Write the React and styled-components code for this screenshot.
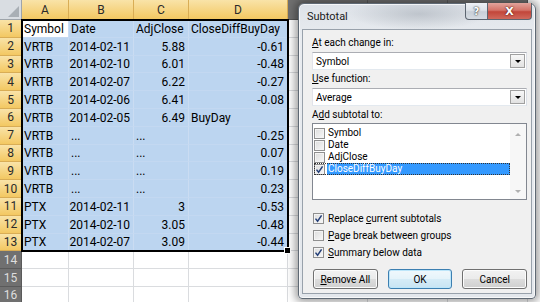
import React from 'react';
import styled, {createGlobalStyle, css} from 'styled-components';

const GlobalStyle = createGlobalStyle`
    html, body {
        margin: 0;
        padding: 0;
        background: #fff;
        overflow: hidden;
    }
`

const Screen = styled.div`
    position: relative;
    width: 540px;
    height: 302px;
    overflow: hidden;
    background: #fff;
`

const colWidths = [22, 47, 65, 55, 99, 80, 80, 80];

const Sheet = styled.div`
    display: grid;
    grid-template-columns: ${colWidths.map(w => w + 'px').join(' ')};
    grid-template-rows: 20px repeat(16, 17.8px);
    font-family: Roboto, "Liberation Sans", sans-serif;
    font-size: 12px;
    color: #000;
`

const Corner = styled.div`
    position: relative;
    background: #d9dde2;
    border-right: 1px solid #9ea4aa;
    border-bottom: 1px solid #9ea4aa;
    box-sizing: border-box;
    &::after {
        content: '';
        position: absolute;
        right: 2px;
        bottom: 2px;
        border-left: 11px solid transparent;
        border-bottom: 11px solid #a9afb5;
    }
`

const headBase = css`
    display: flex;
    align-items: center;
    justify-content: center;
    box-sizing: border-box;
    font-size: 12px;
    ${props => props.$on ? css`
        background: linear-gradient(#f9e3a8, #f3c862);
        color: #2a2a2a;
    ` : css`
        background: #707070;
        color: #dedede;
    `}
`

const ColHead = styled.div`
    ${headBase};
    border-right: 1px solid ${props => props.$on ? '#d9ad55' : '#5a5a5a'};
    border-bottom: 1px solid ${props => props.$on ? '#e1922f' : '#5a5a5a'};
`

const RowHead = styled.div`
    ${headBase};
    border-right: 1px solid ${props => props.$on ? '#e1922f' : '#5a5a5a'};
    border-bottom: 1px solid ${props => props.$on ? '#d9ad55' : '#5a5a5a'};
`

const Cell = styled.div`
    display: flex;
    align-items: center;
    justify-content: ${props => props.$right ? 'flex-end' : 'flex-start'};
    padding: 1px 3px 0 2px;
    box-sizing: border-box;
    white-space: nowrap;
    background: ${props => props.$active ? '#fff' : props.$sel ? '#bcd5f0' : '#fff'};
    border-right: 1px solid ${props => props.$sel ? '#cadcf2' : '#dadcdf'};
    border-bottom: 1px solid ${props => props.$sel ? '#c3d8f1' : '#dadcdf'};
`

const SelectionFrame = styled.div`
    position: absolute;
    left: 21px;
    top: 19px;
    width: 268px;
    height: 233px;
    border: 2px solid #000;
    box-sizing: border-box;
    pointer-events: none;
    &::after {
        content: '';
        position: absolute;
        right: -4px;
        bottom: -4px;
        width: 5px;
        height: 5px;
        background: #000;
        border: 1px solid #fff;
    }
`

const rows = [
    ['Symbol', 'Date', 'AdjClose', 'CloseDiffBuyDay'],
    ['VRTB', '2014-02-11', '5.88', '-0.61'],
    ['VRTB', '2014-02-10', '6.01', '-0.48'],
    ['VRTB', '2014-02-07', '6.22', '-0.27'],
    ['VRTB', '2014-02-06', '6.41', '-0.08'],
    ['VRTB', '2014-02-05', '6.49', 'BuyDay'],
    ['VRTB', '...', '...', '-0.25'],
    ['VRTB', '...', '...', '0.07'],
    ['VRTB', '...', '...', '0.19'],
    ['VRTB', '...', '...', '0.23'],
    ['PTX', '2014-02-11', '3', '-0.53'],
    ['PTX', '2014-02-10', '3.05', '-0.48'],
    ['PTX', '2014-02-07', '3.09', '-0.44'],
];

const isNumeric = (v) => /^-?\d[\d.]*$/.test(v) || /^\d{4}-\d\d-\d\d$/.test(v);

function Spreadsheet() {
    // columns E onwards sit under the dialog, so their letters are left out
    const letters = ['A', 'B', 'C', 'D', '', '', ''];
    const cells = [<Corner key="corner" />];
    letters.forEach((l, i) => {
        cells.push(<ColHead key={'h' + i} $on={i < 4}>{l}</ColHead>);
    });
    for (let r = 0; r < 16; r++) {
        const data = rows[r];
        cells.push(<RowHead key={'r' + r} $on={!!data}>{r + 1}</RowHead>);
        letters.forEach((l, c) => {
            const v = data && c < 4 ? data[c] : '';
            cells.push(
                <Cell
                    key={c + '-' + r}
                    $sel={!!data && c < 4}
                    $active={r === 0 && c === 0}
                    $right={r > 0 && isNumeric(v)}
                >
                    {v}
                </Cell>
            );
        });
    }
    return (
        <>
            <Sheet>{cells}</Sheet>
            <SelectionFrame />
        </>
    );
}

/* ---------- dialog ---------- */

const Dialog = styled.div`
    position: absolute;
    left: 298px;
    top: 3px;
    width: 238px;
    height: 296px;
    box-sizing: border-box;
    display: flex;
    flex-direction: column;
    padding: 0 3px 4px 3px;
    border: 1px solid #5f6974;
    border-radius: 6px 6px 4px 4px;
    background:
        radial-gradient(ellipse 70px 16px at 120px 10px, rgba(150, 158, 168, 0.45), transparent),
        linear-gradient(180deg, #dde2e8 0%, #e9ecf0 12%, #e3e7ec 100%);
    box-shadow: 0 0 8px 3px rgba(0, 0, 0, 0.38), inset 0 0 0 1px rgba(255, 255, 255, 0.7);
    font-family: Roboto, "Noto Sans", sans-serif;
    font-size: 10px;
    color: #000;
`

const TitleBar = styled.div`
    display: flex;
    height: 25px;
    flex-shrink: 0;
`

const Title = styled.div`
    align-self: center;
    padding-left: 5px;
    font-size: 11px;
    color: #1a1a1a;
`

const CaptionButtons = styled.div`
    display: flex;
    margin-left: auto;
    margin-top: -1px;
    align-self: flex-start;
`

const CaptionButton = styled.div`
    height: 17px;
    box-sizing: border-box;
    display: flex;
    align-items: center;
    justify-content: center;
    border: 1px solid #5c6570;
    border-top: none;
    font-family: "DejaVu Sans", sans-serif;
    font-weight: bold;
    color: #fff;
    ${props => props.$close ? css`
        width: 44px;
        border-radius: 0 0 4px 0;
        border-left: none;
        background: linear-gradient(#e2a49c 0%, #d47368 45%, #c2463a 55%, #d0695c 100%);
        font-size: 11px;
        text-shadow: 0 0 2px #5a1a14, 0 0 1px #5a1a14;
    ` : css`
        width: 23px;
        border-radius: 0 0 0 4px;
        background: linear-gradient(#eef1f5 0%, #dde2e8 45%, #c8cfd7 55%, #d6dce3 100%);
        font-size: 10px;
        text-shadow: 0 0 2px #333, 0 0 1px #333;
    `}
`

const Client = styled.div`
    flex: 1;
    display: flex;
    flex-direction: column;
    background: #f0f0f0;
    border: 1px solid #98a1ab;
    padding: 6px 4px 0 9px;
`

const Label = styled.div`
    height: 14px;
    line-height: 14px;
    margin-top: ${props => props.$first ? 0 : 2}px;
`

const Key = styled.span`
    text-decoration: underline;
    text-underline-offset: 1px;
`

const Combo = styled.div`
    display: flex;
    align-items: center;
    height: 18px;
    margin-top: 2px;
    box-sizing: border-box;
    background: #fff;
    border: 1px solid #abadb3;
    border-color: #abadb3 #dbdfe6 #e3e9ef #e2e3ea;
    padding-left: 3px;
`

const ComboText = styled.span`
    flex: 1;
`

const DropButton = styled.div`
    width: 15px;
    height: 14px;
    margin-right: 1px;
    box-sizing: border-box;
    border: 1px solid #a0a0a0;
    background: linear-gradient(#f7f7f7, #e2e2e2);
    display: flex;
    align-items: center;
    justify-content: center;
    &::after {
        content: '';
        border-left: 3px solid transparent;
        border-right: 3px solid transparent;
        border-top: 3px solid #000;
    }
`

const ListBox = styled.div`
    display: flex;
    height: 77px;
    margin-top: 1px;
    box-sizing: border-box;
    background: #fff;
    border: 1px solid #828790;
`

const ListItems = styled.div`
    flex: 1;
    padding-top: 3px;
`

const ListItem = styled.div`
    display: flex;
    align-items: center;
    height: 12px;
    margin-left: 1px;
    box-sizing: border-box;
    ${props => props.$focus && css`
        outline: 1px dotted #333;
        outline-offset: -1px;
    `}
`

const ItemText = styled.span`
    flex: 1;
    height: 12px;
    line-height: 12px;
    margin-left: 2px;
    padding-left: 1px;
    ${props => props.$sel && css`
        background: #3399ff;
        color: #fff;
    `}
`

const ScrollBar = styled.div`
    width: 16px;
    display: flex;
    flex-direction: column;
    justify-content: space-between;
    align-items: center;
    padding: 9px 0 6px;
    box-sizing: border-box;
    background: #f7f7f7;
`

const Arrow = styled.div`
    border-left: 3px solid transparent;
    border-right: 3px solid transparent;
    ${props => props.$up ? css`
        border-bottom: 3px solid #b0b0b0;
    ` : css`
        border-top: 3px solid #b0b0b0;
    `}
`

const Box = styled.div`
    width: 11px;
    height: 11px;
    flex-shrink: 0;
    box-sizing: border-box;
    border: 1px solid #8f8f8f;
    background: linear-gradient(135deg, #dcdcdc, #f8f8f8);
    box-shadow: inset 0 0 0 1px #f4f4f4;
    display: flex;
    align-items: center;
    justify-content: center;
`

const Options = styled.div`
    margin-top: 10px;
`

const OptionRow = styled.div`
    display: flex;
    align-items: center;
    height: 17px;
    gap: 4px;
    margin-left: 1px;
`

const ButtonRow = styled.div`
    display: flex;
    gap: 10px;
    margin-top: 8px;
    padding-left: 1px;
`

const Button = styled.div`
    width: 65px;
    height: 20px;
    box-sizing: border-box;
    display: flex;
    align-items: center;
    justify-content: center;
    border-radius: 3px;
    border: 1px solid #707070;
    background: linear-gradient(#f2f2f2 0%, #ebebeb 49%, #dddddd 50%, #cfcfcf 100%);
    box-shadow: inset 0 0 0 1px #fcfcfc;
    ${props => props.$default && css`
        border-color: #3c7fb1;
        background: linear-gradient(#f0f8fc 0%, #e5f3fa 49%, #d6ecf7 50%, #c8e4f3 100%);
        box-shadow: inset 0 0 0 1px #bde6fa;
    `}
`

function Check() {
    return (
        <svg width="9" height="9" viewBox="0 0 9 9">
            <path d="M1.5 4.6 L3.6 7.2 L7.6 1.4" fill="none" stroke="#243f78" strokeWidth="1.5" />
        </svg>
    );
}

function CheckBox({checked}) {
    return <Box>{checked && <Check />}</Box>;
}

const fields = ['Symbol', 'Date', 'AdjClose', 'CloseDiffBuyDay'];

function SubtotalDialog() {
    return (
        <Dialog>
            <TitleBar>
                <Title>Subtotal</Title>
                <CaptionButtons>
                    <CaptionButton>?</CaptionButton>
                    <CaptionButton $close>X</CaptionButton>
                </CaptionButtons>
            </TitleBar>
            <Client>
                <Label $first><Key>A</Key>t each change in:</Label>
                <Combo>
                    <ComboText>Symbol</ComboText>
                    <DropButton />
                </Combo>
                <Label><Key>U</Key>se function:</Label>
                <Combo>
                    <ComboText>Average</ComboText>
                    <DropButton />
                </Combo>
                <Label>A<Key>d</Key>d subtotal to:</Label>
                <ListBox>
                    <ListItems>
                        {fields.map((f, i) => (
                            <ListItem key={f} $focus={i === 3}>
                                <CheckBox checked={i === 3} />
                                <ItemText $sel={i === 3}>{f}</ItemText>
                            </ListItem>
                        ))}
                    </ListItems>
                    <ScrollBar>
                        <Arrow $up />
                        <Arrow />
                    </ScrollBar>
                </ListBox>
                <Options>
                    <OptionRow>
                        <CheckBox checked />
                        <span>Replace <Key>c</Key>urrent subtotals</span>
                    </OptionRow>
                    <OptionRow>
                        <CheckBox />
                        <span><Key>P</Key>age break between groups</span>
                    </OptionRow>
                    <OptionRow>
                        <CheckBox checked />
                        <span><Key>S</Key>ummary below data</span>
                    </OptionRow>
                </Options>
                <ButtonRow>
                    <Button><span><Key>R</Key>emove All</span></Button>
                    <Button $default>OK</Button>
                    <Button>Cancel</Button>
                </ButtonRow>
            </Client>
        </Dialog>
    );
}

export default function App() {
    return (
        <Screen>
            <GlobalStyle />
            <Spreadsheet />
            <SubtotalDialog />
        </Screen>
    );
}
